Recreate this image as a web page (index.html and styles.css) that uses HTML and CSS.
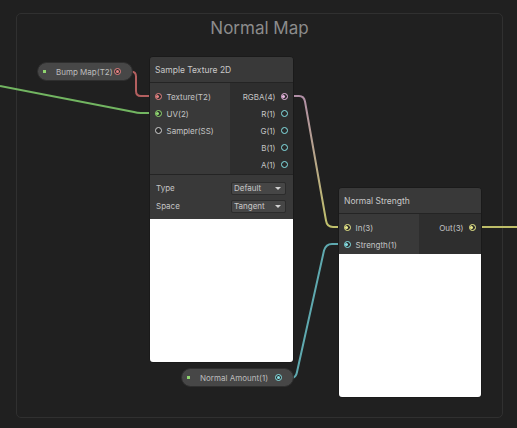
FILE: index.html
```html
<!DOCTYPE html>
<html>
<head>
<meta charset="utf-8">
<link rel="stylesheet" href="styles.css">
</head>
<body>
<div class="canvas">
  <div class="group"><div class="group-title">Normal Map</div></div>

  <svg class="wires" width="517" height="428" viewBox="0 0 517 428">
    <defs>
      <linearGradient id="rgbaIn" gradientUnits="userSpaceOnUse" x1="0" y1="95" x2="0" y2="226">
        <stop offset="0" stop-color="#b08ea6"/>
        <stop offset="1" stop-color="#c0c06c"/>
      </linearGradient>
    </defs>
    <path d="M0 86 L134 112 Q137 113 141 113 H158" stroke="#72b561" stroke-width="2" fill="none"/>
    <path d="M118 71.5 H131 Q136 71.5 136 76.5 V91 Q136 96 141 96 H158" stroke="#b35f5f" stroke-width="2" fill="none"/>
    <path d="M284 96 H299 Q304 96 305 101.5 L326 220.5 Q327 227 333 227 H347" stroke="url(#rgbaIn)" stroke-width="2" fill="none"/>
    <path d="M279 378 H291 Q296 378 297 372 L324 250.5 Q326 244 332 244 H347" stroke="#5fa9af" stroke-width="2" fill="none"/>
    <path d="M473 227 H517" stroke="#bdbd68" stroke-width="2" fill="none"/>
  </svg>

  <div class="prop bump">
    <span class="prop-dot"></span>
    <span class="prop-label">Bump Map(T2)</span>
    <span class="port filled red"></span>
  </div>

  <div class="node sample">
    <div class="node-header">Sample Texture 2D</div>
    <div class="ports">
      <div class="inputs">
        <div class="port-row"><span class="port filled red"></span><span>Texture(T2)</span></div>
        <div class="port-row"><span class="port filled green"></span><span>UV(2)</span></div>
        <div class="port-row"><span class="port white"></span><span>Sampler(SS)</span></div>
      </div>
      <div class="outputs">
        <div class="port-row out"><span>RGBA(4)</span><span class="port filled pink"></span></div>
        <div class="port-row out"><span>R(1)</span><span class="port cyan"></span></div>
        <div class="port-row out"><span>G(1)</span><span class="port cyan"></span></div>
        <div class="port-row out"><span>B(1)</span><span class="port cyan"></span></div>
        <div class="port-row out"><span>A(1)</span><span class="port cyan"></span></div>
      </div>
    </div>
    <div class="settings">
      <div class="setting-row"><span class="setting-label">Type</span><span class="dropdown">Default<span class="caret"></span></span></div>
      <div class="setting-row"><span class="setting-label">Space</span><span class="dropdown">Tangent<span class="caret"></span></span></div>
    </div>
    <div class="preview"></div>
  </div>

  <div class="node strength">
    <div class="node-header">Normal Strength</div>
    <div class="ports">
      <div class="inputs">
        <div class="port-row"><span class="port filled yellow"></span><span>In(3)</span></div>
        <div class="port-row"><span class="port filled cyan"></span><span>Strength(1)</span></div>
      </div>
      <div class="outputs">
        <div class="port-row out"><span>Out(3)</span><span class="port filled yellow"></span></div>
      </div>
    </div>
    <div class="preview"></div>
  </div>

  <div class="prop amount">
    <span class="prop-dot"></span>
    <span class="prop-label">Normal Amount(1)</span>
    <span class="port filled cyan"></span>
  </div>
</div>
</body>
</html>
```

FILE: styles.css
```css
* { box-sizing: border-box; }
html, body { margin: 0; padding: 0; }
body {
  background: #202020;
  font-family: Inter, "Noto Sans", sans-serif;
  color: #c4c4c4;
}
.canvas {
  position: relative;
  width: 517px;
  height: 428px;
  overflow: hidden;
  background: #202020;
}
.group {
  position: absolute;
  left: 16px;
  top: 13px;
  width: 487px;
  height: 405px;
  border: 1px solid #303030;
  border-radius: 5px;
}
.group-title {
  text-align: center;
  font-size: 17px;
  color: #8c8c8c;
  margin-top: 3px;
  line-height: 22px;
}
.wires {
  position: absolute;
  left: 0;
  top: 0;
}
.node {
  position: absolute;
  background: #2e2e2e;
  border: 1px solid #1a1a1a;
  border-radius: 4px;
  overflow: hidden;
  display: flex;
  flex-direction: column;
}
.sample { left: 149px; top: 56px; width: 145px; }
.strength { left: 338px; top: 187px; width: 144px; }
.node-header {
  height: 26px;
  background: #393939;
  border-bottom: 1px solid #242424;
  padding-left: 5px;
  display: flex;
  align-items: center;
  font-size: 8.5px;
  color: #c8c8c8;
}
.ports {
  display: flex;
}
.inputs {
  width: 80px;
  background: #393939;
  padding: 5px 0 1px;
}
.outputs {
  flex: 1;
  background: #2e2e2e;
  padding: 5px 0 1px;
}
.port-row {
  height: 17px;
  display: flex;
  align-items: center;
  gap: 5px;
  padding-left: 4.5px;
  font-size: 8px;
  color: #c4c4c4;
  white-space: nowrap;
}
.port-row.out {
  justify-content: flex-end;
  padding-left: 0;
  padding-right: 5.5px;
}
.port {
  width: 7px;
  height: 7px;
  border-radius: 50%;
  border: 1.5px solid currentColor;
  background: #2a2a2a;
  flex: none;
  position: relative;
}
.port.filled::after {
  content: "";
  position: absolute;
  left: 0.5px;
  top: 0.5px;
  width: 3px;
  height: 3px;
  border-radius: 50%;
  background: currentColor;
}
.port.red { color: #e88383; }
.port.green { color: #93dc72; }
.port.white { color: #d0d0d0; }
.port.pink { color: #ecb9e4; }
.port.cyan { color: #86e2e6; }
.port.yellow { color: #eeee8c; }
.settings {
  background: #393939;
  border-top: 1px solid #242424;
  padding: 4px 0 4px;
}
.setting-row {
  height: 18px;
  display: flex;
  align-items: center;
  padding-left: 6px;
  padding-right: 7px;
  font-size: 8px;
}
.setting-label {
  flex: 1;
  color: #c4c4c4;
}
.dropdown {
  width: 55px;
  height: 13px;
  background: #464646;
  border: 1px solid #2c2c2c;
  border-radius: 2px;
  display: flex;
  align-items: center;
  padding-left: 2px;
  padding-right: 4px;
  font-size: 8px;
  color: #c8c8c8;
  justify-content: space-between;
}
.caret {
  width: 0;
  height: 0;
  border-left: 3px solid transparent;
  border-right: 3px solid transparent;
  border-top: 3.5px solid #d2d2d2;
}
.preview {
  height: 143px;
  background: #ffffff;
}
.prop {
  position: absolute;
  height: 19px;
  border-radius: 10px;
  background: #474747;
  border: 1px solid #2e2e2e;
  display: flex;
  align-items: center;
  padding-left: 5px;
  padding-right: 11px;
  font-size: 8px;
  color: #bdbdbd;
  white-space: nowrap;
}
.bump { left: 37px; top: 62px; width: 96px; }
.amount { left: 181px; top: 368px; width: 113px; }
.prop-dot {
  width: 3px;
  height: 3px;
  background: #8fd46f;
  margin-right: 10px;
  flex: none;
}
.prop .port { margin-left: auto; }
```
